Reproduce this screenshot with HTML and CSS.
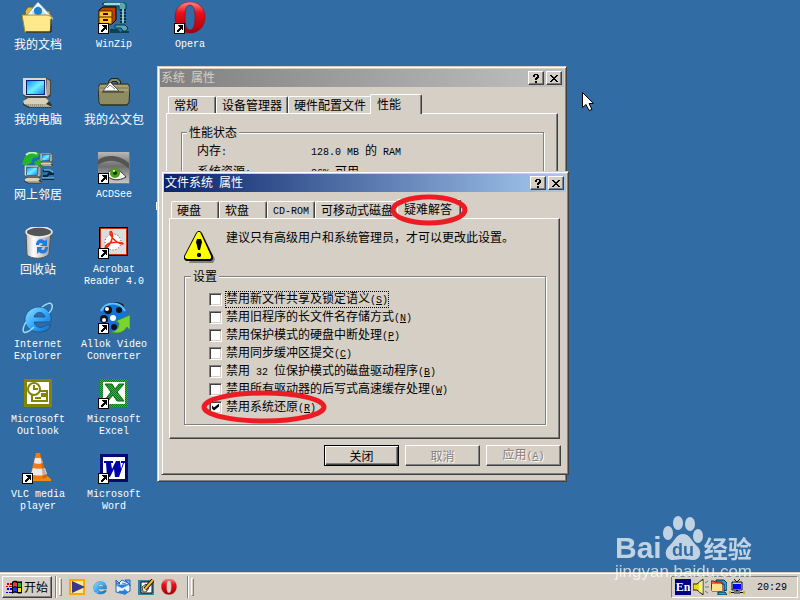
FILE: index.html
```html
<!DOCTYPE html>
<html lang="zh-CN">
<head>
  <meta charset="UTF-8">
  <meta name="viewport" content="width=device-width, initial-scale=1.0">
  <title>系统 属性</title>
  <link rel="stylesheet" href="styles.css">
</head>
<body>
  <svg class="defs" aria-hidden="true">
    <defs>
      <linearGradient id="blueGlass" x1="0" y1="0" x2="1" y2="1"><stop offset="0" stop-color="#9df"/><stop offset=".5" stop-color="#3af"/><stop offset="1" stop-color="#16b"/></linearGradient>
      <linearGradient id="screenGlass" x1="0" y1="0" x2="1" y2="1"><stop offset="0" stop-color="#1a8cff"/><stop offset=".5" stop-color="#6ff0ff"/><stop offset="1" stop-color="#18e"/></linearGradient>
      <linearGradient id="operaRed" x1="0" y1="0" x2="0" y2="1"><stop offset="0" stop-color="#ff8a8a"/><stop offset=".35" stop-color="#e8101a"/><stop offset="1" stop-color="#a80008"/></linearGradient>
      <linearGradient id="binGrey"><stop offset="0" stop-color="#bbb"/><stop offset=".3" stop-color="#fff"/><stop offset="1" stop-color="#999"/></linearGradient>
      <linearGradient id="eyeGrey" x1="0" y1="0" x2="0" y2="1"><stop offset="0" stop-color="#b8b8b8"/><stop offset=".45" stop-color="#6e6e6e"/><stop offset="1" stop-color="#ccc"/></linearGradient>
      <pattern id="greenDots" width="2" height="2" patternUnits="userSpaceOnUse"><rect width="2" height="2" fill="#087a18"/><path d="M0 0h1v1h1v1H1V1H0z" fill="#5b9a62"/></pattern>
      <pattern id="blueDots" width="2" height="2" patternUnits="userSpaceOnUse"><rect width="2" height="2" fill="#0000c0"/><path d="M0 0h1v1h1v1H1V1H0z" fill="#00006c"/></pattern>
      <symbol id="shortcut" viewBox="0 0 11 11">
        <g shape-rendering="crispEdges"><rect width="11" height="11" fill="#000"/><rect x="1" y="1" width="9" height="9" fill="#fff"/>
        <path d="M4 2h5v5H8V6H7v1H6v1H5v1H3V7h1V6h1V5h1V4H5V3H4z"/></g>
      </symbol>
      <symbol id="pc" viewBox="0 0 32 32">
        <path d="M1 24l5-4h18l6 8-1 3H7l-6-3z" fill="#333"/>
        <path d="M1 24l5-3h18l3 3-3 3H2z" fill="#d8d0b8"/><path d="M2 27h22l6 3H8z" fill="#bcb498"/>
        <path d="M4 28h18M8 30h19" stroke="#777" stroke-dasharray="1 1"/>
        <path d="M1 1h24l4 2v16l-3 2H4L1 18z" fill="#444"/><path d="M1 1h23l1 18H4L1 17z" fill="#ddd8cc"/><path d="M25 2l3 2v13l-3 3z" fill="#a8a498"/>
        <rect x="4" y="3" width="19" height="15" fill="#027"/><rect x="5" y="4" width="17" height="13" fill="url(#screenGlass)"/>
      </symbol>
      <symbol id="ie" viewBox="0 0 32 32">
        <path d="M29 20H12c1 6 9 7 12 3h5c-2 5-6 7-12 7C9 30 3 25 3 18S9 5 17 5s13 6 12 15zM12 15h11c-1-6-10-6-11 0z" fill="url(#blueGlass)" stroke="#147" stroke-width=".6"/>
        <path d="M20 5c5-4 9-5 10-2s-1 6-3 8M4 20c-4 7-4 12 1 10 3-1 5-3 7-5" fill="none" stroke="#9cdcff" stroke-width="1.5"/>
      </symbol>
      <symbol id="opera" viewBox="0 0 32 32">
        <path fill-rule="evenodd" d="M16 0C7 0 1 6 1 15s6 16 15 16 15-7 15-16S25 0 16 0zm0 3c4 0 5 5 5 12s-1 13-5 13-5-6-5-13 1-12 5-12z" fill="url(#operaRed)" stroke="#8d0008" stroke-width=".5"/>
      </symbol>
      <symbol id="zipclamp" viewBox="0 0 32 32">
        <path d="M4 2l4-2h17l3 2v5l-3 1h-4V4H7zM17 23h10l3 3-2 3h-3l-2-3h-6z" fill="#57a7b6" stroke="#063844"/>
        <path d="M22 8h6M22 11h6M22 14h6M22 17h6M22 20h6" stroke="#05303c" stroke-width="2"/><path d="M25 7v14M6 2h16" stroke="#b4f0f4" stroke-width="1.5"/>
        <path d="M1 8l4-3h13v13l-4 4H1z" fill="#b84400" stroke="#000"/><path d="M1 9h13v13H1z" fill="#ffc42e" stroke="#5c2600"/>
        <path d="M1 15h13" stroke="#5c2600"/><path d="M5 12h5M5 18h5" stroke="#400" stroke-width="2"/>
        <path d="M13 28h6l2 2h-8zM23 30h8" stroke="#0b4250" stroke-width="2" fill="#8ed0d4"/>
      </symbol>
    </defs>
  </svg>

  <main class="desktop">
    <ul class="icons">
      <li>
        <svg viewBox="0 0 32 32">
          <path d="M3 9l3-4h7l2 4h13v20H5z" fill="#d6bf42" stroke="#6b5a10"/>
          <path d="M5 13L16 0l15 16-4 9z" fill="#fff" stroke="#8fa3c8"/><path d="M9 11l7-8 9 10-4 4z" fill="#bfe2ff"/><circle cx="16" cy="9" r="4" fill="#1a80c8"/>
          <path d="M0 13h26l4 2-2 15H3z" fill="#ffe98a" stroke="#a88a28"/><path d="M4 30h25V17" stroke="#111" fill="none"/>
        </svg>
        <span>我的文档</span>
      </li>
      <li><svg viewBox="0 0 32 32"><use href="#pc" width="32" height="32"/></svg><span>我的电脑</span></li>
      <li>
        <svg viewBox="0 0 32 32">
          <circle cx="12" cy="12" r="12" fill="#1670b8"/><path d="M2 6c3-5 9-7 16-5l-2 4-5 1-2 5-6 3-3-2zM12 10l6-3 4 5-3 5h-5z" fill="#28b428"/><path d="M4 3c3-3 8-3 11-1" stroke="#bff5bf" stroke-width="2" fill="none"/>
          <use href="#pc" x="18" y="0" width="14" height="16"/><use href="#pc" x="2" y="13" width="19" height="19"/>
          <path d="M21 19h5l4 3h2M21 24h4l3-3M20 27h12" stroke="#07263f" fill="none" stroke-width="2"/><path d="M22 18h6l3 2M20 26h12" stroke="#7fd4ff" fill="none"/>
        </svg>
        <span>网上邻居</span>
      </li>
      <li>
        <svg viewBox="0 0 32 32">
          <path d="M4 5l1 23c4 4 17 5 22-1l2-22z" fill="url(#binGrey)" stroke="#555"/><ellipse cx="17" cy="5" rx="13" ry="5" fill="#555" stroke="#eee" stroke-width="1.5"/>
          <path d="M14 18c0-6 6-7 9-4l2-2v7h-7l3-2c-2-2-4-1-4 1zM26 20c0 7-6 8-9 5l-2 2v-7h6l-2 2c2 2 4 1 4-2z" fill="#237be0"/>
        </svg>
        <span>回收站</span>
      </li>
      <li><svg viewBox="0 0 32 32"><use href="#ie" width="32" height="32"/></svg><span class="en">Internet Explorer</span></li>
      <li>
        <svg viewBox="0 0 32 32">
          <rect x="2" y="2" width="28" height="28" fill="#848400"/><rect x="5" y="5" width="22" height="22" fill="#fff"/>
          <path d="M10 15v9h15V14h-9" fill="none" stroke="#848400" stroke-width="2"/><circle cx="12" cy="12" r="6" fill="#fff" stroke="#848400" stroke-width="2"/><path d="M12 8v4h4M20 17h3v2h-3zM13 21h6" stroke="#848400" stroke-width="2" fill="none"/>
        </svg>
        <span class="en">Microsoft Outlook</span>
      </li>
      <li>
        <svg viewBox="0 0 32 32">
          <path d="M4 25l20-2 5 4v2H8z" fill="#f08a10"/><path d="M14 1h4l7 24c-3 3-14 3-17 0z" fill="#f47b10"/>
          <path d="M13 6h6l2 5c-2 1-7 1-9 0zM11 16c3 1 9 1 12 0l2 6c-4 2-12 2-16 0z" fill="#e8eaec"/><path d="M18 1l7 24-4 2z" fill="#9b4b10" opacity=".4"/>
          <use href="#shortcut" x="0" y="21" width="11" height="11"/>
        </svg>
        <span class="en">VLC media player</span>
      </li>
      <li><svg viewBox="0 0 32 32"><use href="#zipclamp" width="32" height="32"/><use href="#shortcut" x="0" y="21" width="11" height="11"/></svg><span class="en">WinZip</span></li>
      <li>
        <svg viewBox="0 0 32 32">
          <path d="M12 9V5l2-2h5l2 2v4" fill="none" stroke="#222" stroke-width="4"/><path d="M12 9V5l2-2h5l2 2v4" fill="none" stroke="#8c8c68" stroke-width="2"/>
          <path d="M2 7h28l2 3-1 16-3 2H3l-2-2-1-16z" fill="#8e8c62" stroke="#2c2c1c"/><path d="M2 9h28M2 13h28" stroke="#bcb98c"/><path d="M5 14l7-9 9 9z" fill="#fff" stroke="#555"/><path d="M9 11l3-3 5 4" stroke="#888" fill="none"/><path d="M4 15h22M3 28h27" stroke="#33321f"/>
        </svg>
        <span>我的公文包</span>
      </li>
      <li>
        <svg viewBox="0 0 32 32">
          <rect width="32" height="32" fill="url(#eyeGrey)"/><path d="M0 13c12-8 24-4 32 5v-6C22 2 8 2 0 8z" fill="#555"/>
          <path d="M8 23c5-8 13-7 20 2-7 4-14 4-20-2z" fill="#f4f6ef" stroke="#333"/><circle cx="17" cy="21" r="5" fill="#4c9c18"/><circle cx="17" cy="21" r="2" fill="#103800"/><circle cx="16" cy="19" r="1" fill="#fff"/>
          <path d="M0 31.500h32M31.500 0v32" stroke="#777"/><use href="#shortcut" x="0" y="21" width="11" height="11"/>
        </svg>
        <span class="en">ACDSee</span>
      </li>
      <li>
        <svg viewBox="0 0 32 32">
          <rect x="1" y="0" width="29" height="29" fill="#000"/><rect x="2" y="1" width="27" height="27" fill="#d42a0a"/><rect x="3" y="2" width="25" height="25" fill="#dcdcdc"/>
          <circle cx="15" cy="15" r="8" fill="#fff" stroke="#444" stroke-dasharray="1 2"/>
          <path d="M12 5c2-2 3 3 2 7s-4 8-6 9 0-4 4-5 9-1 12 0-1 2-5-1-7-7-7-10z" fill="none" stroke="#ee2a08" stroke-width="1.5"/>
          <use href="#shortcut" x="0" y="21" width="11" height="11"/>
        </svg>
        <span class="en">Acrobat Reader 4.0</span>
      </li>
      <li>
        <svg viewBox="0 0 32 32">
          <ellipse cx="17" cy="4" rx="9" ry="4" fill="#222"/><circle cx="15" cy="15" r="14" fill="#1473d8"/><path d="M3 9C8-1 22-1 27 9" stroke="#5cc2ff" stroke-width="2" fill="none"/>
          <g fill="#111"><circle cx="10" cy="8" r="4"/><circle cx="21" cy="8" r="3"/><circle cx="6" cy="17" r="4"/><circle cx="16" cy="25" r="3"/></g><g fill="#fff"><circle cx="9" cy="7" r="2"/><circle cx="6" cy="18" r="2"/><circle cx="15" cy="16" r="3"/></g>
          <path d="M13 30c6-1 8-4 8-9l-3-2 14-6v15l-3-3c-4 6-9 7-16 5z" fill="#79d52c" stroke="#3e8a10" stroke-width=".6"/>
          <use href="#shortcut" x="0" y="21" width="11" height="11"/>
        </svg>
        <span class="en">Allok Video Converter</span>
      </li>
      <li>
        <svg viewBox="0 0 32 32">
          <rect x="2" y="2" width="28" height="28" fill="url(#greenDots)"/><rect x="5" y="5" width="22" height="22" fill="#fff"/>
          <path d="M7 7h7l3 5 4-5h5l-7 8 7 9h-7l-4-6-5 6H6l7-9z" fill="url(#greenDots)" stroke="#066b16"/>
          <use href="#shortcut" x="0" y="21" width="11" height="11"/>
        </svg>
        <span class="en">Microsoft Excel</span>
      </li>
      <li>
        <svg viewBox="0 0 32 32">
          <rect x="2" y="2" width="28" height="28" fill="url(#blueDots)"/><rect x="5" y="5" width="22" height="22" fill="#fff"/>
          <path d="M6 9h9v2h-2l1 6 4-8h4l1 8 2-6h-2V9h5v2h-2l-5 14h-4l-1-8-4 8H9L8 11H6z" fill="#0000a8"/>
          <use href="#shortcut" x="0" y="21" width="11" height="11"/>
        </svg>
        <span class="en">Microsoft Word</span>
      </li>
      <li><svg viewBox="0 0 32 32"><use href="#opera" width="32" height="32"/><use href="#shortcut" x="0" y="21" width="11" height="11"/></svg><span class="en">Opera</span></li>
    </ul>

    <section class="window system">
      <header class="titlebar inactive">
        <h2>系统<span class="en"> </span>属性</h2>
        <button type="button" aria-label="帮助"><svg viewBox="0 0 8 9"><path d="M1 1h1V0h4v1h1v3H6v1H5v1H3V4h1V3h1V1H3v2H1zM3 7h2v2H3z"/></svg></button>
        <button type="button" aria-label="关闭"><svg viewBox="0 0 8 9"><path d="M0 1h2v1h1v1h2V2h1V1h2v1H7v1H6v1H5v1h1v1h1v1h1v1H6V7H5V6H3v1H2v1H0V7h1V6h1V5h1V4H2V3H1V2H0z"/></svg></button>
      </header>
      <div class="tabs">
        <button type="button">常规</button><button type="button">设备管理器</button><button type="button">硬件配置文件</button><button type="button" class="active">性能</button>
      </div>
      <div class="page">
        <fieldset>
          <legend>性能状态</legend>
          <dl>
            <dt>内存<span class="en">:</span></dt><dd><span class="en">128.0 MB </span>的<span class="en"> RAM</span></dd>
            <dt>系统资源<span class="en">:</span></dt><dd><span class="en">86% </span>可用</dd>
          </dl>
        </fieldset>
      </div>
    </section>

    <section class="window filesystem">
      <header class="titlebar">
        <h2>文件系统<span class="en"> </span>属性</h2>
        <button type="button" aria-label="帮助"><svg viewBox="0 0 8 9"><path d="M1 1h1V0h4v1h1v3H6v1H5v1H3V4h1V3h1V1H3v2H1zM3 7h2v2H3z"/></svg></button>
        <button type="button" aria-label="关闭"><svg viewBox="0 0 8 9"><path d="M0 1h2v1h1v1h2V2h1V1h2v1H7v1H6v1H5v1h1v1h1v1h1v1H6V7H5V6H3v1H2v1H0V7h1V6h1V5h1V4H2V3H1V2H0z"/></svg></button>
      </header>
      <div class="tabs">
        <button type="button">硬盘</button><button type="button">软盘</button><button type="button"><span class="en">CD-ROM</span></button><button type="button">可移动式磁盘</button><button type="button" class="active">疑难解答</button>
      </div>
      <div class="page">
        <div class="warning">
          <svg viewBox="0 0 32 32"><path d="M17 3l14 25-2 4H5z" fill="#808080"/><path d="M12 2l2-2h2l2 2 11 23v3l-2 2H2l-2-2v-3z" fill="#000"/><path d="M13 2l1-1h2l1 2 10 22v2l-1 1H3l-2-1v-2z" fill="#ff0"/><path d="M13 8h4l1 3-2 8h-2l-2-8zM14 22h2l1 1v2l-1 1h-2l-1-1v-2z"/></svg>
          <p>建议只有高级用户和系统管理员，才可以更改此设置。</p>
        </div>
        <fieldset>
          <legend>设置</legend>
          <label><input type="checkbox"><span class="focused">禁用新文件共享及锁定语义<span class="en">(<u>S</u>)</span></span></label>
          <label><input type="checkbox"><span>禁用旧程序的长文件名存储方式<span class="en">(<u>N</u>)</span></span></label>
          <label><input type="checkbox"><span>禁用保护模式的硬盘中断处理<span class="en">(<u>P</u>)</span></span></label>
          <label><input type="checkbox"><span>禁用同步缓冲区提交<span class="en">(<u>C</u>)</span></span></label>
          <label><input type="checkbox"><span>禁用<span class="en"> 32 </span>位保护模式的磁盘驱动程序<span class="en">(<u>B</u>)</span></span></label>
          <label><input type="checkbox"><span>禁用所有驱动器的后写式高速缓存处理<span class="en">(<u>W</u>)</span></span></label>
          <label><input type="checkbox" checked><span>禁用系统还原<span class="en">(<u>R</u>)</span></span></label>
        </fieldset>
      </div>
      <div class="actions">
        <button type="button" class="default">关闭</button>
        <button type="button" disabled>取消</button>
        <button type="button" disabled>应用<span class="en">(<u>A</u>)</span></button>
      </div>
      <svg class="ring ring-tab" viewBox="0 0 78 32"><ellipse cx="39" cy="16" rx="36" ry="13"/></svg>
      <svg class="ring ring-option" viewBox="0 0 126 34"><ellipse cx="63" cy="17" rx="60" ry="14"/></svg>
    </section>

    <svg class="cursor" viewBox="0 0 12 20"><path d="M.500.500v15l3.500-3 3 6 3-1-3-6h4.500z" fill="#fff" stroke="#000"/></svg>
  </main>

  <footer class="taskbar">
    <button type="button" class="start">
      <svg viewBox="0 0 17 15">
        <path d="M6 2c4-3 6 1 10-1v12c-4 2-6-2-10 1z" fill="#000"/><path d="M7 3c1-1 3-1 4 0v4c-1-1-3-1-4 0z" fill="#f33"/><path d="M12 3h3v4h-3z" fill="#2b2"/><path d="M7 8c1-1 3-1 4 0v4c-1-1-3-1-4 0z" fill="#23f"/><path d="M12 8h3v4h-3z" fill="#fd0"/>
        <path d="M1 3h2v2H1zM4 3h2v2H4zM0 6h2v1H0zM3 6h3v1H3z" fill="#c00"/><path d="M1 8h2v2H1zM4 8h2v2H4zM0 12h2v1H0zM3 12h3v1H3z" fill="#00c"/>
      </svg>开始
    </button>
    <i class="divider"></i><i class="grip"></i>
    <div class="quick">
      <button type="button" aria-label="Media Player"><svg viewBox="0 0 16 16"><path d="M0 0h16v16H0z" fill="#f8a800"/><path d="M2 2h12v12H2z" fill="#ffe7a0"/><path d="M3 2l13 6-13 6z" fill="#38388c"/></svg></button>
      <button type="button" aria-label="Internet Explorer"><svg viewBox="0 0 32 32"><use href="#ie" width="32" height="32"/></svg></button>
      <button type="button" aria-label="Outlook Express"><svg viewBox="0 0 16 16"><path d="M1 5l3-1 3-3 6 3 2 2v6l-5 3-9-2z" fill="#eaf3ff" stroke="#2b62b0"/><path d="M1 1l4 4H1zM10 1h5v6l-2-3z" fill="#55b5f5" stroke="#2b62b0"/><path d="M1 6l6 3 8-4M4 12h5v-2l4 3-4 3v-2H4z" stroke="#2b82dd" fill="#2780d8" stroke-width=".5"/><path d="M7 4l4 1" stroke="#777"/></svg></button>
      <button type="button" aria-label="显示桌面"><svg viewBox="0 0 16 16"><path d="M0 1h16v15H0z" fill="#2d84a8"/><path d="M3 3h9l2 2v9H3z" fill="#fff" stroke="#111"/><path d="M4 8l4-3 3 4-3 4H5z" fill="#dde6d0" stroke="#444"/><path d="M7 10l8-9" stroke="#111" stroke-width="4"/><path d="M7 10l8-9" stroke="#fb2" stroke-width="2"/></svg></button>
      <button type="button" aria-label="Opera"><svg viewBox="0 0 32 32"><use href="#opera" width="32" height="32"/></svg></button>
    </div>
    <i class="divider"></i><i class="grip"></i>
    <div class="tray">
      <span class="lang">En</span>
      <svg viewBox="0 0 16 16"><path d="M0 5h4l6-5v16l-6-5H0z" fill="#e8dc10" stroke="#222"/><path d="M7 3v10M9 2v12" stroke="#fff"/><path d="M12 4l3-2M12 8h4M12 12l3 2" stroke="#777"/></svg>
      <svg viewBox="0 0 16 16"><path d="M5 1h8l3 3v7l-3 1V5H5zM7 13h7l2 3H7z" fill="#25a8d0" stroke="#034"/><path d="M0 2h3l1 1h7v9H1z" fill="#f36a24" stroke="#811"/><path d="M1 5h10v7H1z" fill="#ffe08a"/></svg>
      <svg viewBox="0 0 16 16"><path d="M5 0l3 3 3-3" stroke="#111" fill="none"/><path d="M3 3h10v8H3z" fill="#ccc" stroke="#111"/><path d="M4 5h8v5H4z" fill="#00f"/><path d="M7 11h2v3H7zM0 13h16v1H0z"/><path d="M5 12h6v3H5z" fill="#777"/><path d="M0 12h2v3H0zM14 12h2v3h-2z" fill="#c9b800"/></svg>
      <time class="en">20:29</time>
    </div>
  </footer>

  <div class="watermark">
    <div class="brand">
      <b>Bai</b>
      <svg viewBox="0 0 42 46"><ellipse cx="6" cy="18" rx="5" ry="7"/><ellipse cx="16" cy="8" rx="5" ry="7"/><ellipse cx="28" cy="9" rx="5" ry="7"/><ellipse cx="36" cy="21" rx="5" ry="7"/><path d="M21 19c7 0 9 8 14 12 6 6 3 14-4 14-4 0-7-1-10-1s-6 1-10 1C4 45 1 37 7 31c5-4 7-12 14-12z"/><text x="21" y="41">du</text></svg>
      <b class="cn">经验</b>
    </div>
    <div class="site">jingyan.baidu.com</div>
  </div>
</body>
</html>
```
FILE: styles.css
```css
* {
  box-sizing: border-box;
}
body {
  margin: 0;
  min-height: 100vh;
  display: flex;
  flex-direction: column;
  position: relative;
  overflow: hidden;
  background: #316ca4;
  color: #000;
  font-family: "Noto Sans CJK SC", sans-serif;
  font-size: 12px;
  line-height: 12px;
}
button {
  font: inherit;
  color: inherit;
  border-radius: 0;
  padding: 0;
}
ul, dl, dd, p, h2 {
  margin: 0;
  padding: 0;
}
svg {
  display: block;
  flex: none;
}
.defs {
  position: absolute;
  width: 0;
  height: 0;
}
.en {
  font-family: "Liberation Mono", monospace;
  font-size: 10px;
  white-space: pre;
}

/* desktop */
.desktop {
  flex: 1;
  position: relative;
}
.desktop::before {
  content: "";
  position: absolute;
  left: 156px;
  top: 202px;
  width: 1px;
  height: 8px;
  background: #fff;
}
.icons {
  list-style: none;
  display: grid;
  grid-template-rows: repeat(7, 75px);
  grid-auto-columns: 76px;
  grid-auto-flow: column;
  color: #fff;
  text-align: center;
}
.icons li {
  display: flex;
  flex-direction: column;
  align-items: center;
  gap: 4px;
  padding-top: 2px;
}
.icons svg {
  width: 32px;
  height: 32px;
}
.icons .en {
  white-space: normal;
  padding-top: 1px;
}
.cursor {
  position: absolute;
  left: 582px;
  top: 92px;
  width: 12px;
  height: 20px;
}

/* windows */
.window {
  position: absolute;
  display: flex;
  flex-direction: column;
  padding: 2px;
  background: #d6cfc5;
  border: 1px solid;
  border-color: #d6cfc5 #404040 #404040 #d6cfc5;
  box-shadow: inset 1px 1px 0 #fff, inset -1px -1px 0 #808080;
}
.system {
  left: 157px;
  top: 66px;
  width: 410px;
  height: 416px;
}
.filesystem {
  left: 161px;
  top: 171px;
  width: 408px;
}
.titlebar {
  display: flex;
  align-items: center;
  height: 18px;
  padding: 0 2px 0 1px;
  background: linear-gradient(90deg, #0a246a, #a6caf0);
  color: #fff;
}
.titlebar.inactive {
  background: linear-gradient(90deg, #808080, #c0c0c0);
  color: #d6cfc5;
}
.titlebar h2 {
  flex: 1;
  font-size: 12px;
  font-weight: normal;
}
.titlebar button,
.actions button,
.start {
  background: #d6cfc5;
  border: 1px solid;
  border-color: #fff #404040 #404040 #fff;
  box-shadow: inset -1px -1px 0 #808080;
}
.titlebar button {
  width: 16px;
  height: 14px;
  display: flex;
  justify-content: center;
  align-items: center;
}
.titlebar button + button {
  margin-left: 2px;
}
.titlebar svg {
  width: 8px;
  height: 9px;
}

/* tabs */
.tabs {
  display: flex;
  align-items: flex-end;
  padding: 7px 8px 0;
}
.tabs button {
  min-width: 48px;
  height: 17px;
  padding: 0 5px;
  text-align: left;
  background: #d6cfc5;
  border: 1px solid;
  border-color: #fff #404040 transparent #fff;
  border-bottom: 0;
  border-radius: 2px 2px 0 0;
  box-shadow: inset -1px 0 0 #808080;
}
.tabs .active {
  position: relative;
  min-width: 52px;
  height: 20px;
  margin: 0 0 -1px -2px;
  padding: 0 8px 2px 6px;
}
.page {
  margin: 0 6px;
  padding: 12px 13px 13px 14px;
  border: 1px solid;
  border-color: #fff #404040 #404040 #fff;
  box-shadow: inset -1px -1px 0 #808080;
}
.system .page {
  flex: 1;
  margin-bottom: 36px;
}
.filesystem .tabs {
  padding-left: 7px;
}
.filesystem .page {
  margin-left: 5px;
}
fieldset {
  margin: 0;
  padding: 8px 24px;
  border: 1px solid #808080;
  box-shadow: 1px 1px 0 #fff, inset 1px 1px 0 #fff;
}
.system fieldset {
  padding: 6px 15px;
}
legend {
  margin-left: -18px;
  padding: 0 2px;
  background: #d6cfc5;
}
.system legend {
  margin-left: -10px;
}
dl {
  display: grid;
  grid-template-columns: 114px 1fr;
  row-gap: 6px;
}
.warning {
  display: flex;
  gap: 10px;
  margin-bottom: 7px;
}
.warning svg {
  width: 32px;
  height: 32px;
}
label {
  display: flex;
  align-items: center;
  gap: 3px;
  height: 18px;
}
label > span {
  padding: 1px;
}
.focused {
  outline: 1px dotted #000;
  outline-offset: -1px;
}
input[type="checkbox"] {
  appearance: none;
  width: 13px;
  height: 13px;
  margin: 0;
  background: #fff;
  border: 1px solid;
  border-color: #808080 #fff #fff #808080;
  box-shadow: inset 1px 1px 0 #404040, inset -1px -1px 0 #d6cfc5;
}
input:checked::before {
  content: "";
  display: block;
  width: 7px;
  height: 7px;
  margin: 2px;
  background: #000;
  clip-path: polygon(0 2px, 2px 4px, 7px 0, 7px 3px, 2px 7px, 0 5px);
}

/* dialog buttons */
.actions {
  display: flex;
  justify-content: flex-end;
  gap: 6px;
  padding: 6px 5px;
}
.actions button {
  width: 75px;
  height: 21px;
}
.actions .default {
  border-color: #000;
  box-shadow: inset 1px 1px 0 #fff, inset -1px -1px 0 #404040, inset -2px -2px 0 #808080;
}
.actions button:disabled {
  color: #808080;
  text-shadow: 1px 1px 0 #fff;
}

/* red marks */
.ring {
  position: absolute;
  fill: none;
  stroke: #ed1c24;
  stroke-width: 5px;
}
.ring-tab {
  left: 228px;
  top: 22px;
  width: 78px;
  height: 32px;
}
.ring-option {
  left: 39px;
  top: 218px;
  width: 126px;
  height: 34px;
}

/* taskbar */
.taskbar {
  display: flex;
  align-items: center;
  height: 28px;
  padding: 2px 2px 0;
  background: #d6cfc5;
  box-shadow: inset 0 1px 0 #d6cfc5, inset 0 2px 0 #fff;
}
.start {
  display: flex;
  align-items: center;
  width: 50px;
  height: 22px;
  padding: 0 3px;
  gap: 1px;
}
.start svg {
  width: 17px;
  height: 15px;
}
.divider {
  width: 2px;
  height: 22px;
  margin-left: 3px;
  background: #fff;
  border-left: 1px solid #808080;
}
.grip {
  width: 3px;
  height: 18px;
  margin-left: 2px;
  border: 1px solid;
  border-color: #fff #808080 #808080 #fff;
}
.quick {
  display: flex;
  gap: 7px;
  padding: 0 7px;
}
.quick button {
  border: 0;
  background: none;
}
.quick svg,
.tray svg {
  width: 16px;
  height: 16px;
}
.tray {
  display: flex;
  align-items: center;
  gap: 2px;
  height: 22px;
  margin-left: auto;
  padding: 0 10px 0 3px;
  border: 1px solid;
  border-color: #808080 #fff #fff #808080;
}
.tray time {
  margin-left: 10px;
  padding-top: 2px;
}
.lang {
  width: 16px;
  height: 16px;
  background: #000080;
  color: #fff;
  font-family: "Liberation Serif", serif;
  font-weight: bold;
  line-height: 16px;
  text-align: center;
}

/* watermark */
.watermark {
  position: absolute;
  right: 45px;
  bottom: 17px;
  width: 140px;
  color: #fff;
  opacity: .7;
}
.brand {
  display: flex;
  align-items: flex-end;
  height: 46px;
}
.brand b {
  font: bold 30px/26px "Liberation Sans", Arial, sans-serif;
}
.brand svg {
  width: 42px;
  height: 46px;
  fill: #fff;
}
.brand text {
  font: bold 18px "Liberation Sans", Arial, sans-serif;
  text-anchor: middle;
  fill: #316ca4;
}
.brand .cn {
  font: bold 24px/26px "Noto Sans CJK SC", sans-serif;
}
.site {
  font: 17px/22px "Liberation Sans", Arial, sans-serif;
}
```
